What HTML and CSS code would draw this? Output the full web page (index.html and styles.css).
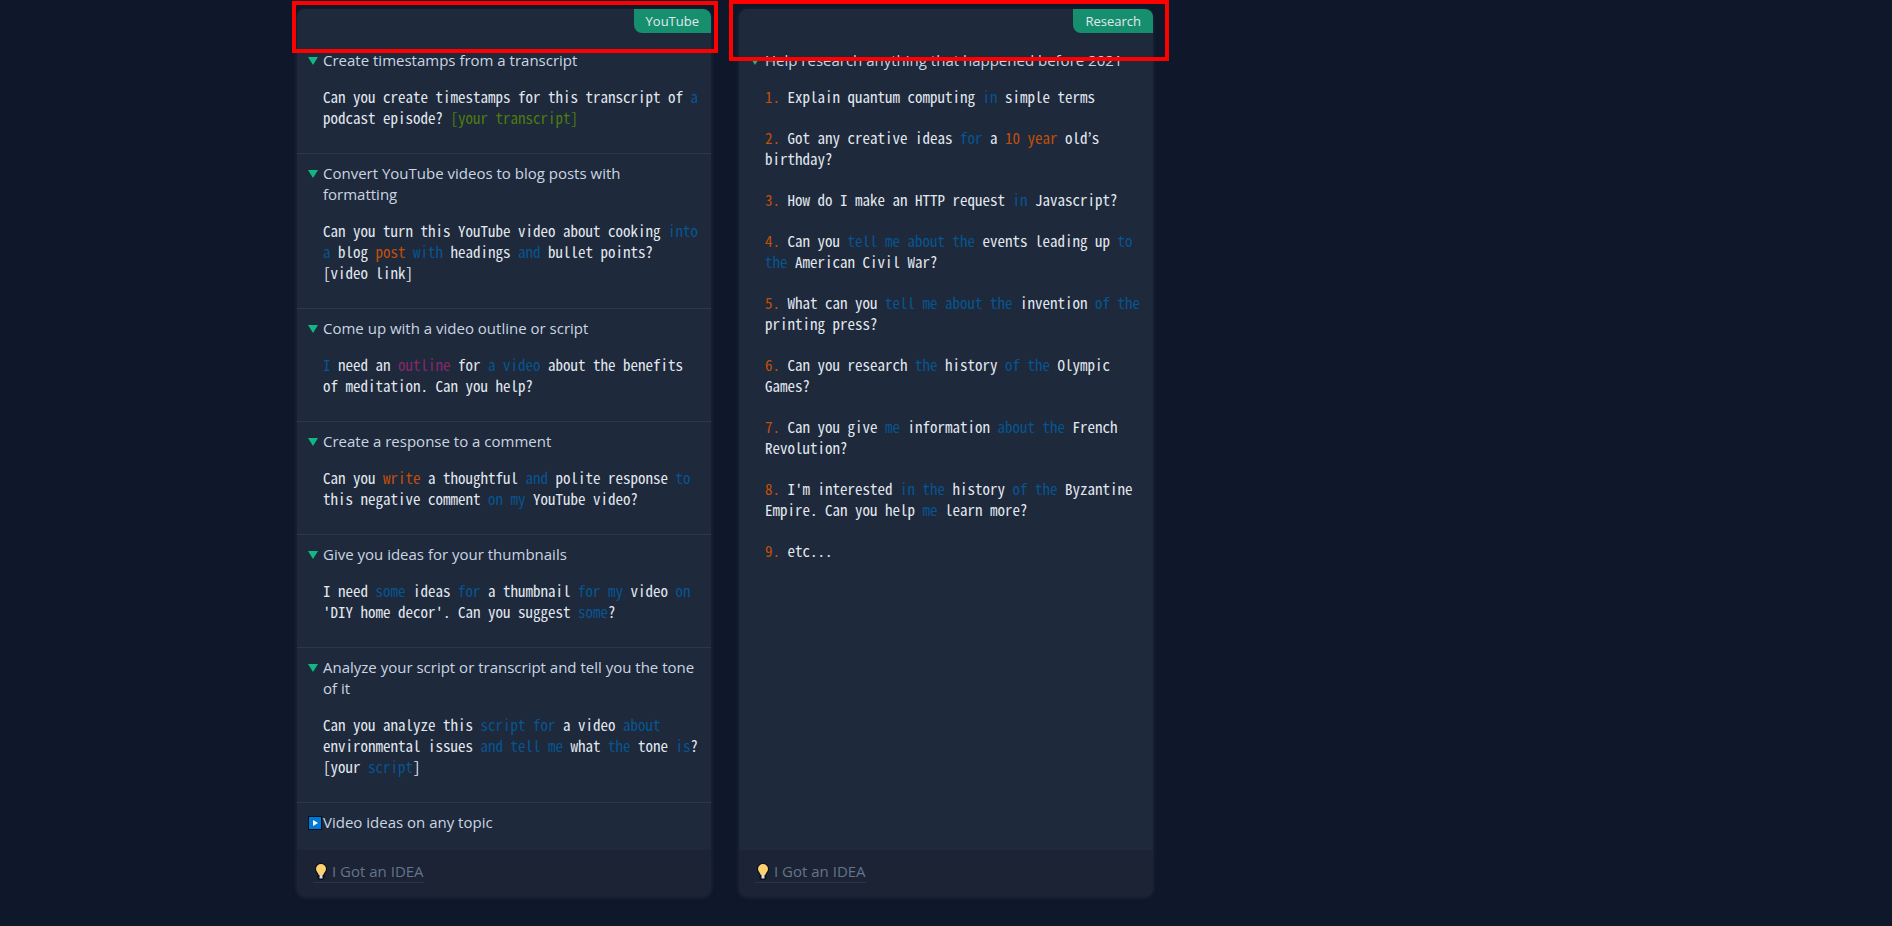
FILE: index.html
```html
<!DOCTYPE html>
<html lang="en">
<head>
  <meta charset="UTF-8">
  <title>Prompt ideas</title>
  <meta name="viewport" content="width=device-width, initial-scale=1.0">
  <link rel="stylesheet" href="styles.css">
</head>
<body>

  <main class="cards">

    <!-- YouTube -->
    <section class="card">
      <span class="tag">YouTube</span>
      <div class="topics">
        <details open>
          <summary>Create timestamps from a transcript</summary>
          <div class="prompts">
            <code>Can you create timestamps for this transcript of <i class="kw">a</i> podcast episode? <i class="str">[your transcript]</i></code>
          </div>
        </details>
        <details open>
          <summary>Convert YouTube videos to blog posts with formatting</summary>
          <div class="prompts">
            <code>Can you turn this YouTube video about cooking <i class="kw">into a</i> blog <i class="num">post</i> <i class="kw">with</i> headings <i class="kw">and</i> bullet points? [video link]</code>
          </div>
        </details>
        <details open>
          <summary>Come up with a video outline or script</summary>
          <div class="prompts">
            <code><i class="kw">I</i> need an <i class="prop">outline</i> for <i class="kw">a video</i> about the benefits of meditation. Can you help?</code>
          </div>
        </details>
        <details open>
          <summary>Create a response to a comment</summary>
          <div class="prompts">
            <code>Can you <i class="num">write</i> a thoughtful <i class="kw">and</i> polite response <i class="kw">to</i> this negative comment <i class="kw">on my</i> YouTube video?</code>
          </div>
        </details>
        <details open>
          <summary>Give you ideas for your thumbnails</summary>
          <div class="prompts">
            <code>I need <i class="kw">some</i> ideas <i class="kw">for</i> a thumbnail <i class="kw">for my</i> video <i class="kw">on</i> 'DIY home decor'. Can you suggest <i class="kw">some</i>?</code>
          </div>
        </details>
        <details open>
          <summary>Analyze your script or transcript and tell you the tone of it</summary>
          <div class="prompts">
            <code>Can you analyze this <i class="kw">script for</i> a video <i class="kw">about</i> environmental issues <i class="kw">and tell me</i> what <i class="kw">the</i> tone <i class="kw">is</i>? [your <i class="kw">script</i>]</code>
          </div>
        </details>
        <details>
          <summary>
            <svg class="play" viewBox="0 0 14 14" aria-hidden="true">
              <rect width="14" height="14" fill="#0b0f18"/>
              <rect x="1" y="1" width="12" height="12" fill="#0078d7"/>
              <path d="M5 4v6l5-3z" fill="#fff"/>
            </svg>
            Video ideas on any topic
          </summary>
        </details>
      </div>
      <footer>
        <a class="idea" href="#">
          <svg class="bulb" viewBox="0 0 12 17" aria-hidden="true">
            <path d="M6 0a6 6 0 0 0-6 6c0 2.600 1.500 4 2.500 5.500V15L4 17h4l1.500-2v-3.500C10.500 10 12 8.600 12 6a6 6 0 0 0-6-6z" fill="#0b0f18"/>
            <path d="M6 1a5 5 0 0 0-5 5c0 2.400 2 3.500 2.800 6h4.400C9 9.500 11 8.400 11 6a5 5 0 0 0-5-5z" fill="#ffd070"/>
            <path d="M4.500 12h3v3.500h-3z" fill="#d5dbe3"/>
          </svg>
          I Got an IDEA
        </a>
      </footer>
      <div class="frame frame-youtube"></div>
    </section>

    <!-- Research -->
    <section class="card">
      <span class="tag">Research</span>
      <div class="topics">
        <details open>
          <summary>Help research anything that happened before 2021</summary>
          <div class="prompts">
            <code><i class="num">1.</i> Explain quantum computing <i class="kw">in</i> simple terms</code>
            <code><i class="num">2.</i> Got any creative ideas <i class="kw">for</i> a <i class="num">10 year</i> old’s birthday?</code>
            <code><i class="num">3.</i> How do I make an HTTP request <i class="kw">in</i> Javascript?</code>
            <code><i class="num">4.</i> Can you <i class="kw">tell me about the</i> events leading up <i class="kw">to the</i> American Civil War?</code>
            <code><i class="num">5.</i> What can you <i class="kw">tell me about the</i> invention <i class="kw">of the</i> printing press?</code>
            <code><i class="num">6.</i> Can you research <i class="kw">the</i> history <i class="kw">of the</i> Olympic Games?</code>
            <code><i class="num">7.</i> Can you give <i class="kw">me</i> information <i class="kw">about the</i> French Revolution?</code>
            <code><i class="num">8.</i> I'm interested <i class="kw">in the</i> history <i class="kw">of the</i> Byzantine Empire. Can you help <i class="kw">me</i> learn more?</code>
            <code><i class="num">9.</i> etc...</code>
          </div>
        </details>
      </div>
      <footer>
        <a class="idea" href="#">
          <svg class="bulb" viewBox="0 0 12 17" aria-hidden="true">
            <path d="M6 0a6 6 0 0 0-6 6c0 2.600 1.500 4 2.500 5.500V15L4 17h4l1.500-2v-3.500C10.500 10 12 8.600 12 6a6 6 0 0 0-6-6z" fill="#0b0f18"/>
            <path d="M6 1a5 5 0 0 0-5 5c0 2.400 2 3.500 2.800 6h4.400C9 9.500 11 8.400 11 6a5 5 0 0 0-5-5z" fill="#ffd070"/>
            <path d="M4.500 12h3v3.500h-3z" fill="#d5dbe3"/>
          </svg>
          I Got an IDEA
        </a>
      </footer>
      <div class="frame frame-research"></div>
    </section>

  </main>

</body>
</html>
```

FILE: styles.css
```css
* {
  margin: 0;
  padding: 0;
  box-sizing: border-box;
}

body {
  background: #0f172a;
  color: #cbd5e1;
  font-family: "Open Sans", "Noto Sans", sans-serif;
  font-size: 15px;
  line-height: 21px;
}

/* Three columns, the last one is free */
.cards {
  display: grid;
  grid-template-columns: repeat(3, 1fr);
  gap: 28px;
  max-width: 1298px;
  margin: 0 auto;
  padding: 9px 0 28px;
}

.card {
  position: relative;
  display: flex;
  flex-direction: column;
  background: #1e293b;
  border-radius: 8px;
  box-shadow: 0 1px 4px rgba(51, 65, 85, 0.5);
}

/* Category label in the corner */
.tag {
  position: absolute;
  top: 0;
  right: 0;
  padding: 0 12px;
  border-radius: 0 8px 0 8px;
  background: #168f6e;
  color: #e2e8f0;
  font-size: 13px;
  font-weight: 500;
  line-height: 24px;
}

.topics {
  flex: 1;
  padding-top: 32px;
}

/* Collapsible topics */
details {
  padding: 9px 9px 25px 26px;
}
details + details {
  border-top: 1px solid #2b384b;
}
details:not([open]) {
  padding-bottom: 17px;
}

summary {
  position: relative;
  padding-right: 7px;
  list-style: none;
  cursor: pointer;
}
summary::-webkit-details-marker {
  display: none;
}
details[open] > summary::before {
  content: "";
  position: absolute;
  top: 7px;
  left: -15px;
  border-top: 8px solid #10b981;
  border-left: 5px solid transparent;
  border-right: 5px solid transparent;
}

.play {
  position: absolute;
  top: 4px;
  left: -15px;
  width: 14px;
  height: 14px;
}

/* Prompt text */
.prompts {
  display: flex;
  flex-direction: column;
  gap: 20px;
  max-width: 51ch;
  padding-top: 15px;
}
code {
  color: #e2e8f0;
  font-family: "Noto Sans Mono CJK KR", "Liberation Mono", monospace;
  font-size: 15px;
}
code i {
  font-style: normal;
}
.kw {
  color: #075591;
}
.num {
  color: #c2500a;
}
.str {
  color: #4d7c0f;
}
.prop {
  color: #86286b;
}

footer {
  display: flex;
  padding: 11px 16px 13px;
  border-radius: 0 0 8px 8px;
  background: #1b2335;
}
.idea {
  display: flex;
  align-items: center;
  gap: 5px;
  padding-left: 2px;
  border-bottom: 1px solid #273449;
  color: #64748b;
  text-decoration: none;
}
.bulb {
  width: 12px;
  height: 17px;
}

/* Red highlight over the card headers */
.frame {
  position: absolute;
  border: 4px solid #f00;
  pointer-events: none;
}
.frame-youtube {
  top: -8px;
  left: -5px;
  right: -7px;
  height: 52px;
}
.frame-research {
  top: -9px;
  left: -10px;
  right: -16px;
  height: 61px;
}
```
